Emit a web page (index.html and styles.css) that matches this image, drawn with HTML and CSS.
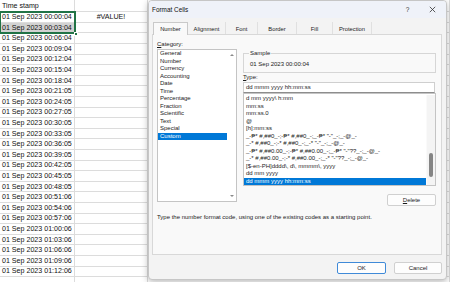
FILE: index.html
```html
<!DOCTYPE html>
<html>
<head>
<meta charset="utf-8">
<link rel="stylesheet" href="styles.css">
</head>
<body>
<div class="screen">
  <div class="sheet">
    <div class="cell">Time stamp</div><div class="cell"></div><div class="cell"></div>
    <div class="cell">01 Sep 2023 00:00:04</div><div class="cell err">#VALUE!</div><div class="cell"></div>
    <div class="cell sel">01 Sep 2023 00:03:04</div><div class="cell"></div><div class="cell"></div>
    <div class="cell">01 Sep 2023 00:06:04</div><div class="cell"></div><div class="cell"></div>
    <div class="cell">01 Sep 2023 00:09:04</div><div class="cell"></div><div class="cell"></div>
    <div class="cell">01 Sep 2023 00:12:04</div><div class="cell"></div><div class="cell"></div>
    <div class="cell">01 Sep 2023 00:15:04</div><div class="cell"></div><div class="cell"></div>
    <div class="cell">01 Sep 2023 00:18:04</div><div class="cell"></div><div class="cell"></div>
    <div class="cell">01 Sep 2023 00:21:05</div><div class="cell"></div><div class="cell"></div>
    <div class="cell">01 Sep 2023 00:24:05</div><div class="cell"></div><div class="cell"></div>
    <div class="cell">01 Sep 2023 00:27:05</div><div class="cell"></div><div class="cell"></div>
    <div class="cell">01 Sep 2023 00:30:05</div><div class="cell"></div><div class="cell"></div>
    <div class="cell">01 Sep 2023 00:33:05</div><div class="cell"></div><div class="cell"></div>
    <div class="cell">01 Sep 2023 00:36:05</div><div class="cell"></div><div class="cell"></div>
    <div class="cell">01 Sep 2023 00:39:05</div><div class="cell"></div><div class="cell"></div>
    <div class="cell">01 Sep 2023 00:42:05</div><div class="cell"></div><div class="cell"></div>
    <div class="cell">01 Sep 2023 00:45:05</div><div class="cell"></div><div class="cell"></div>
    <div class="cell">01 Sep 2023 00:48:05</div><div class="cell"></div><div class="cell"></div>
    <div class="cell">01 Sep 2023 00:51:06</div><div class="cell"></div><div class="cell"></div>
    <div class="cell">01 Sep 2023 00:54:06</div><div class="cell"></div><div class="cell"></div>
    <div class="cell">01 Sep 2023 00:57:06</div><div class="cell"></div><div class="cell"></div>
    <div class="cell">01 Sep 2023 01:00:06</div><div class="cell"></div><div class="cell"></div>
    <div class="cell">01 Sep 2023 01:03:06</div><div class="cell"></div><div class="cell"></div>
    <div class="cell">01 Sep 2023 01:06:06</div><div class="cell"></div><div class="cell"></div>
    <div class="cell">01 Sep 2023 01:09:06</div><div class="cell"></div><div class="cell"></div>
    <div class="cell">01 Sep 2023 01:12:06</div><div class="cell"></div><div class="cell"></div>
    <div class="cell"></div><div class="cell"></div><div class="cell"></div>
  </div>
  <div class="selection"><span class="handle"></span></div>

  <div class="dialog">
    <div class="titlebar">
      <span class="title">Format Cells</span>
      <span class="tb-btn help">?</span>
      <span class="tb-btn"><svg width="7" height="7" viewBox="0 0 7 7"><path d="M0.8 0.8 L6.2 6.2 M6.2 0.8 L0.8 6.2" stroke="#333" stroke-width="0.8" fill="none"/></svg></span>
    </div>
    <div class="tabs">
      <span class="tab active">Number</span>
      <span class="tab">Alignment</span>
      <span class="tab">Font</span>
      <span class="tab">Border</span>
      <span class="tab">Fill</span>
      <span class="tab">Protection</span>
    </div>
    <div class="panel">
      <div class="col-left">
        <div class="label"><u>C</u>ategory:</div>
        <div class="listbox cat">
          <div class="items">
            <div class="item">General</div>
            <div class="item">Number</div>
            <div class="item">Currency</div>
            <div class="item">Accounting</div>
            <div class="item">Date</div>
            <div class="item">Time</div>
            <div class="item">Percentage</div>
            <div class="item">Fraction</div>
            <div class="item">Scientific</div>
            <div class="item">Text</div>
            <div class="item">Special</div>
            <div class="item selected">Custom</div>
          </div>
          <div class="arrows">
            <span class="arrow up"></span>
            <span class="arrow down"></span>
          </div>
        </div>
      </div>
      <div class="col-right">
        <fieldset class="sample">
          <legend>Sample</legend>
          <div class="sample-text">01 Sep 2023 00:00:04</div>
        </fieldset>
        <div class="label type-label"><u>T</u>ype:</div>
        <div class="type-input">dd mmm yyyy hh:mm:ss</div>
        <div class="listbox types">
          <div class="items">
            <div class="item">d mm yyyy\ h:mm</div>
            <div class="item">mm:ss</div>
            <div class="item">mm:ss.0</div>
            <div class="item">@</div>
            <div class="item">[h]:mm:ss</div>
            <div class="item">_-₱* #,##0_-;-₱* #,##0_-;_-₱* "-"_-;_-@_-</div>
            <div class="item">_-* #,##0_-;-* #,##0_-;_-* "-"_-;_-@_-</div>
            <div class="item">_-₱* #,##0.00_-;-₱* #,##0.00_-;_-₱* "-"??_-;_-@_-</div>
            <div class="item">_-* #,##0.00_-;-* #,##0.00_-;_-* "-"??_-;_-@_-</div>
            <div class="item">[$-en-PH]dddd\, d\, mmmm\, yyyy</div>
            <div class="item">dd mm yyyy</div>
            <div class="item selected">dd mmm yyyy hh:mm:ss</div>
          </div>
          <div class="track"><span class="thumb"></span></div>
        </div>
        <div class="btn delete"><u>D</u>elete</div>
      </div>
      <div class="desc">Type the number format code, using one of the existing codes as a starting point.</div>
    </div>
    <div class="footer">
      <div class="btn ok">OK</div>
      <div class="btn cancel">Cancel</div>
    </div>
  </div>
</div>
</body>
</html>
```
FILE: styles.css
```css
* { box-sizing: border-box; }
body { margin: 0; }
.screen {
  width: 450px; height: 282px; position: relative; overflow: hidden;
  background: #fff; font-family: "Liberation Sans", Arial, sans-serif; color: #000;
}
.sheet {
  display: grid;
  grid-template-columns: 75px 73px 1fr;
  grid-template-rows: 12.3px;
  grid-auto-rows: 10.6px;
}
.cell {
  border-right: 1px solid #dcdcdc; border-bottom: 1px solid #dcdcdc;
  font-size: 7.1px; line-height: 1; white-space: nowrap; overflow: hidden;
  display: flex; align-items: center; padding: 1px 0 0 2px; color: #111;
}
.cell.err { justify-content: center; padding-left: 0; }
.cell.sel { background: #d2d2d2; }
.selection {
  position: absolute; left: -1px; top: 11.3px; width: 77px; height: 23px;
  border: 2px solid #217346;
}
.handle {
  position: absolute; right: -3.5px; bottom: -3.5px; width: 4px; height: 4px;
  background: #217346; border: 1px solid #fff;
}

.dialog {
  position: absolute; left: 148px; top: 0; width: 299px; height: 280px;
  background: #f3f3f3; border: 1px solid #c6c6c6; border-radius: 4px;
  box-shadow: 0 2px 7px rgba(0,0,0,0.28);
  display: flex; flex-direction: column; font-size: 6px; color: #1b1b1b;
  overflow: hidden;
}
.titlebar {
  height: 17px; flex: none; background: #eff2f9;
  display: flex; align-items: center; padding: 0 1px 0 3px;
}
.title { flex: 1; font-size: 6.4px; color: #111; }
.tb-btn { width: 25px; display: flex; justify-content: center; align-items: center; }
.help { font-size: 6.5px; color: #333; }

.tabs {
  display: grid; grid-template-columns: 35px 38px 32px 39px 36px 39px;
  margin: 4px 0 0 4px; height: 13px; flex: none; font-size: 5.8px;
}
.tab {
  display: flex; align-items: center; justify-content: center;
  border-right: 1px solid #e0e0e0; height: 12px; padding-top: 1px;
}
.tab.active {
  background: #f9f9f9; border: 1px solid #c9c9c9; border-bottom: none;
  height: 13px; position: relative; z-index: 1; padding-top: 0;
}

.panel {
  margin: -1px 4px 0 3px; height: 221px; flex: none;
  background: #f9f9f9; border: 1px solid #d8d8d8;
  display: grid; grid-template-columns: 80px 1fr; column-gap: 6px;
  align-content: start; padding: 5.5px 5px 0 4px;
}
.label { line-height: 7px; }
.listbox { background: #fff; border: 1px solid #c4c4c4; display: flex; }
.listbox.cat { height: 153px; margin-top: 1.5px; }
.items { flex: 1; min-width: 0; }
.item { line-height: 7.5px; padding-left: 2px; white-space: nowrap; overflow: hidden; }
.item.selected { background: #0078d7; color: #fff; }
.arrows {
  width: 9px; display: flex; flex-direction: column; justify-content: space-between;
  align-items: center; padding: 3.5px 0 4px;
}
.arrow { width: 0; height: 0; border-left: 2px solid transparent; border-right: 2px solid transparent; }
.arrow.up { border-bottom: 2.5px solid #8a8a8a; }
.arrow.down { border-top: 2.5px solid #8a8a8a; }

.col-right { display: flex; flex-direction: column; padding-top: 9px; }
.sample {
  margin: 0; min-width: 0; border: 1px solid #d6d6d6; padding: 4px 4px 4px 6px;
}
.sample legend { padding: 0 1px; line-height: 7px; margin-left: -1px; }
.sample-text { line-height: 7px; }
.type-label { margin-top: 1px; }
.type-input {
  margin-top: 1.5px; height: 10.5px; background: #fff;
  border: 1px solid #cfcfcf; border-bottom-color: #8d8d8d;
  padding-left: 2px; line-height: 8.5px; margin-right: 1px;
}
.listbox.types { height: 93px; margin-top: 0.5px; padding-top: 1.25px; }
.track { width: 9px; display: flex; justify-content: center; padding-top: 58px; background: #f4f4f4; border-left: 1px solid #fafafa; }
.thumb { width: 3.5px; height: 24px; background: #858585; border-radius: 2px; }

.btn {
  height: 12px; background: #fdfdfd; border: 1px solid #d0d0d0; border-radius: 2px;
  display: flex; align-items: center; justify-content: center;
}
.delete { width: 49px; margin-top: 8px; align-self: flex-end; }
.desc { grid-column: 1 / -1; margin-top: 7.5px; line-height: 7px; }

.footer { display: flex; justify-content: flex-end; gap: 8px; padding: 7px 4px 0 0; }
.ok { width: 49px; border-color: #3f8ad8; }
.cancel { width: 48px; }
```
